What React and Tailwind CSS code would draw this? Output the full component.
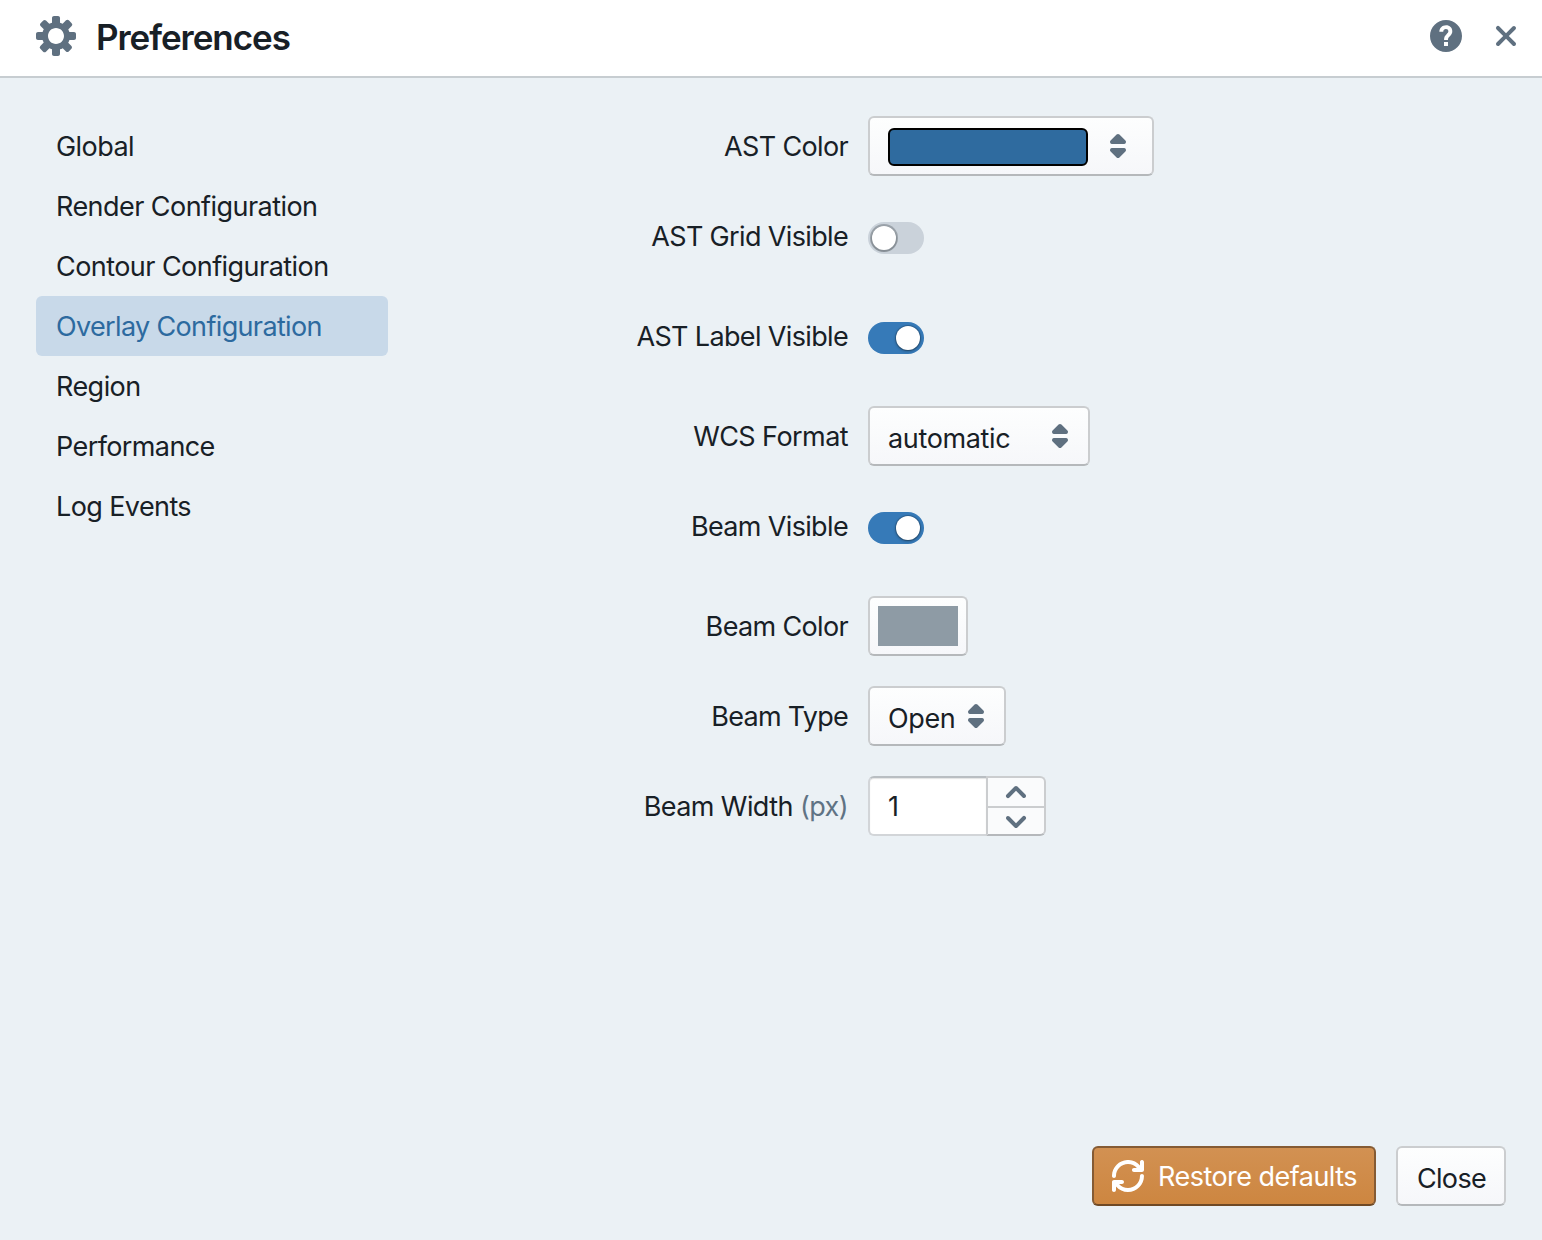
const GRAY = "#5f7080";

const BTN =
  "flex items-center rounded-[6px] border-2 border-[#cbcdcf] border-b-[#b5b8bb] bg-linear-to-b from-[#fdfefe] to-[#f6f7fa]";

function Icon({ d, size, box, color = GRAY, className = "" }) {
  return (
    <svg
      width={size}
      height={size}
      viewBox={`0 0 ${box} ${box}`}
      fill={color}
      fillRule="evenodd"
      className={`block shrink-0 ${className}`}
    >
      <path d={d} />
    </svg>
  );
}

const COG =
  "M19 8h-2.31c-.14-.46-.33-.89-.56-1.3l1.7-1.7a.996.996 0 000-1.41l-1.41-1.41a.996.996 0 00-1.41 0l-1.7 1.7c-.41-.22-.84-.41-1.3-.55V1c0-.55-.45-1-1-1H9c-.55 0-1 .45-1 1v2.33c-.48.14-.94.34-1.37.58L5 2.28a.972.972 0 00-1.36 0L2.28 3.64c-.37.38-.37.99 0 1.36l1.62 1.62c-.24.44-.44.89-.59 1.38H1c-.55 0-1 .45-1 1v2c0 .55.45 1 1 1h2.31c.14.46.33.89.56 1.3L2.17 15a.996.996 0 000 1.41l1.41 1.41c.39.39 1.02.39 1.41 0l1.7-1.7c.41.22.84.41 1.3.55V19c0 .55.45 1 1 1h2c.55 0 1-.45 1-1v-2.33c.48-.14.94-.35 1.37-.59L15 17.72c.37.37.98.37 1.36 0l1.36-1.36c.37-.37.37-.98 0-1.36l-1.62-1.62c.24-.43.45-.89.6-1.38H19c.55 0 1-.45 1-1V9c0-.55-.45-1-1-1zm-9 6c-2.21 0-4-1.79-4-4s1.79-4 4-4 4 1.79 4 4-1.79 4-4 4z";
const HELP =
  "M8 0C3.58 0 0 3.58 0 8s3.58 8 8 8 8-3.58 8-8-3.58-8-8-8zM7 11h2v2H7zM11.14 5.66c0 1-.4 1.66-1.09 2.31-.72.68-1.08.96-1.08 2.03H7.03c0-1.56.42-2.1 1.24-2.89.58-.56.91-.87.91-1.43 0-.75-.5-1.17-1.21-1.17-.79 0-1.3.5-1.36 1.37H4.66C4.72 4.05 6 2.6 8.04 2.6c1.86 0 3.1 1.2 3.1 3.06z";
const CROSS =
  "M11.41 10l3.29-3.29c.19-.18.3-.43.3-.71a1.003 1.003 0 00-1.71-.71L10 8.59l-3.29-3.3a1.003 1.003 0 00-1.42 1.42L8.59 10 5.3 13.29c-.19.18-.3.43-.3.71a1.003 1.003 0 001.71.71l3.29-3.3 3.29 3.29c.18.19.43.3.71.3a1.003 1.003 0 00.71-1.71L11.41 10z";
const CARETS =
  "M5 7h6a1.003 1.003 0 00.71-1.71l-3-3C8.53 2.11 8.28 2 8 2s-.53.11-.71.29l-3 3A1.003 1.003 0 005 7zm6 2H5a1.003 1.003 0 00-.71 1.71l3 3c.18.18.43.29.71.29s.53-.11.71-.29l3-3A1.003 1.003 0 0011 9z";
const CHEVRON =
  "M12.71 9.29l-4-4C8.53 5.11 8.28 5 8 5s-.53.11-.71.29l-4 4a1.003 1.003 0 001.42 1.42L8 7.41l3.29 3.29c.18.19.43.3.71.3a1.003 1.003 0 00.71-1.71z";
const REFRESH =
  "M14.99 6.99c-.55 0-1 .45-1 1 0 3.31-2.69 6-6 6-1.77 0-3.36-.78-4.46-2h1.46c.55 0 1-.45 1-1s-.45-1-1-1h-4c-.55 0-1 .45-1 1v4c0 .55.45 1 1 1s1-.45 1-1v-1.74a7.95 7.95 0 006 2.74c4.42 0 8-3.58 8-8 0-.55-.45-1-1-1zm0-7c-.55 0-1 .45-1 1v1.74a7.95 7.95 0 00-6-2.74c-4.42 0-8 3.58-8 8 0 .55.45 1 1 1s1-.45 1-1c0-3.31 2.69-6 6-6 1.77 0 3.36.78 4.46 2h-1.46c-.55 0-1 .45-1 1s.45 1 1 1h4c.55 0 1-.45 1-1v-4c0-.55-.45-1-1-1z";

const TABS = [
  ["Global", "tracking-[-0.55px]"],
  ["Render Configuration", "tracking-[-0.55px]"],
  ["Contour Configuration", "tracking-[-0.55px]"],
  ["Overlay Configuration", "tracking-[-0.65px]"],
  ["Region", "tracking-[-0.55px]"],
  ["Performance", "tracking-[-0.6px]"],
  ["Log Events", "tracking-[-0.6px]"],
];

function Row({ label, tracking = "tracking-[-0.65px]", gap = "mb-[30px]", children }) {
  return (
    <div className={`flex h-[60px] items-center gap-5 ${gap}`}>
      <div className={`w-[400px] pt-0.5 text-right whitespace-nowrap ${tracking}`}>{label}</div>
      {children}
    </div>
  );
}

function Toggle({ on }) {
  return (
    <div
      className={`mt-1 flex h-8 w-14 items-center rounded-full ${
        on ? "justify-end bg-[#367ab8] pr-1" : "justify-start bg-[#cad2da] pl-1"
      }`}
    >
      <div
        className={`size-6 rounded-full bg-white ${
          on
            ? "shadow-[0_0_0_1px_rgba(16,22,26,0.2),0_1px_3px_rgba(16,22,26,0.45)]"
            : "shadow-[0_0_0_2px_rgba(16,22,26,0.25),0_1px_1px_1px_rgba(16,22,26,0.15)]"
        }`}
      />
    </div>
  );
}

export default function App() {
  return (
    <div className="flex h-[1240px] w-[1542px] flex-col bg-[#ebf1f5] font-['Inter','Liberation_Sans',sans-serif] text-[27px] leading-9 text-[#182026]">
      <header className="flex h-[78px] shrink-0 items-center border-b-2 border-[#c7cdd1] bg-white pr-4 pb-1 pl-9">
        <Icon d={COG} size={40} box={20} />
        <h1 className="ml-5 flex-1 pt-0.5 text-[35px] font-semibold tracking-[-1.05px]">Preferences</h1>
        <Icon d={HELP} size={32} box={16} className="mr-6" />
        <Icon d={CROSS} size={40} box={20} />
      </header>

      <main className="flex flex-1 pt-[38px]">
        <nav className="ml-9 w-[352px]">
          {TABS.map(([name, tracking]) => (
            <div
              key={name}
              className={`flex h-[60px] items-center rounded-[6px] pt-0.5 pl-5 whitespace-nowrap ${tracking} ${
                name === "Overlay Configuration" ? "bg-[#c8d9e9] text-[#2d6a9f]" : ""
              }`}
            >
              {name}
            </div>
          ))}
        </nav>

        <section className="ml-[60px]">
          <Row label="AST Color">
            <div className={`${BTN} h-[60px] w-[286px] pl-[18px]`}>
              <div className="mt-0.5 h-[38px] w-[200px] rounded-[6px] border-2 border-black bg-[#2f6b9f]" />
              <Icon d={CARETS} size={32} box={16} className="ml-[14px]" />
            </div>
          </Row>
          <Row label="AST Grid Visible" gap="mb-[40px]">
            <Toggle />
          </Row>
          <Row label="AST Label Visible" gap="mb-[40px]">
            <Toggle on />
          </Row>
          <Row label="WCS Format" tracking="tracking-[-0.57px]">
            <div className={`${BTN} h-[60px] w-[222px] justify-between pr-[12px] pl-[18px]`}>
              <span className="mt-1.5 tracking-[-0.35px]">automatic</span>
              <Icon d={CARETS} size={32} box={16} />
            </div>
          </Row>
          <Row label="Beam Visible" gap="mb-[40px]">
            <Toggle on />
          </Row>
          <Row label="Beam Color">
            <div className={`${BTN} h-[60px] w-[100px] justify-center`}>
              <div className="h-10 w-20 bg-[#8e9ba5]" />
            </div>
          </Row>
          <Row label="Beam Type" tracking="tracking-[-0.72px]">
            <div className={`${BTN} h-[60px] w-[138px] justify-between pr-[12px] pl-[18px]`}>
              <span className="mt-1.5 tracking-[-0.35px]">Open</span>
              <Icon d={CARETS} size={32} box={16} />
            </div>
          </Row>
          <Row
            tracking="tracking-[-0.57px]"
            label={
              <>
                Beam Width <span className="text-[#5f7384]">(px)</span>
              </>
            }
          >
            <div className="flex h-[60px]">
              <div className="flex h-[60px] w-[118px] items-center rounded-l-[6px] border-2 border-r-0 border-[#d2d5d8] border-t-[#b9bec2] bg-white pt-0.5 pl-[18px] shadow-[inset_0_1px_1px_rgba(16,22,26,0.12)]">
                1
              </div>
              <div className="flex h-[60px] w-[60px] flex-col rounded-r-[6px] border-2 border-[#cbcdcf] border-b-[#b5b8bb] bg-[#fafbfc]">
                <div className="flex h-[30px] shrink-0 items-center justify-center border-b-2 border-[#cbcdcf]">
                  <Icon d={CHEVRON} size={32} box={16} />
                </div>
                <div className="flex h-7 shrink-0 items-center justify-center">
                  <Icon d={CHEVRON} size={32} box={16} className="rotate-180" />
                </div>
              </div>
            </div>
          </Row>
        </section>
      </main>

      <footer className="flex shrink-0 justify-end gap-5 pr-9 pb-[34px]">
        <div className="flex h-[60px] w-[284px] items-center rounded-[6px] border-2 border-[#855b34] border-b-[#6f4925] bg-linear-to-b from-[#d29152] to-[#cd8640] pl-[18px] text-white">
          <Icon d={REFRESH} size={32} box={16} color="#ffffff" />
          <span className="ml-[14px] pt-0.5 tracking-[-0.53px] whitespace-nowrap">Restore defaults</span>
        </div>
        <div className={`${BTN} h-[60px] w-[110px] justify-center`}>
          <span className="mt-1.5 ml-px tracking-[-0.65px]">Close</span>
        </div>
      </footer>
    </div>
  );
}
